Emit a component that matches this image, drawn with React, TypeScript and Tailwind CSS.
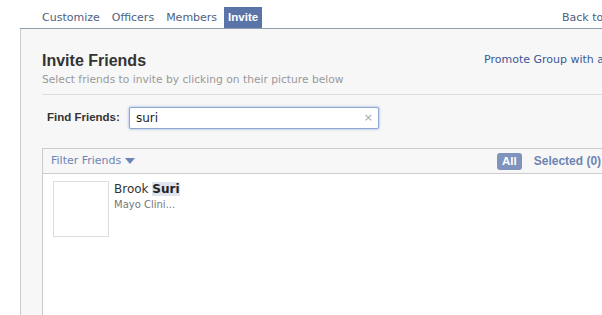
import React from "react";

const tabs = ["Customize", "Officers", "Members"];

export default function App() {
  return (
    <div className="w-[602px] h-[315px] overflow-hidden bg-white text-[11px] text-[#333] font-['DejaVu_Sans',sans-serif]">
      {/* tab bar */}
      <div className="ml-[20px] w-[800px] h-[29px] flex items-end border-b border-[#8e9bb0] pl-[17px]">
        <div className="w-[525px] flex items-end gap-[2px]">
          {tabs.map((t) => (
            <span key={t} className="h-[21px] px-[5px] leading-[21px] text-[#4e5f80]">
              {t}
            </span>
          ))}
          <span className="h-[21px] px-[4px] leading-[21px] bg-[#5b74a8] text-white font-bold text-[11.5px] font-['Liberation_Sans',sans-serif]">
            Invite
          </span>
        </div>
        <span className="h-[21px] leading-[21px] text-[#4e5f80]">Back to Group</span>
      </div>

      {/* panel */}
      <div className="ml-[20px] w-[800px] h-[300px] border-l border-[#cccccc] bg-[#f7f7f7] pl-[21px] pt-[22px]">
        <div className="flex border-b border-[#dddddd] pb-[7px]">
          <div className="w-[442px]">
            <h1 className="text-[16px] leading-[20px] font-bold text-[#333] font-['Liberation_Sans',sans-serif]">
              Invite Friends
            </h1>
            <p className="mt-[2px] text-[10.7px] leading-[14px] text-[#999]">
              Select friends to invite by clicking on their picture below
            </p>
          </div>
          <span className="mt-[2px] leading-[14px] text-[#3b5998]">Promote Group with an Ad</span>
        </div>

        <div className="mt-[12px] flex items-center pl-[5px]">
          <span className="w-[82px] text-[11.5px] font-bold text-[#333] font-['Liberation_Sans',sans-serif]">
            Find Friends:
          </span>
          <div className="w-[250px] h-[22px] flex items-center justify-between border border-[#8fa6cf] rounded-[2px] bg-white pl-[6px] pr-[5px] shadow-[0_0_2px_1px_#c5d3ec]">
            <span className="text-[12px] text-[#222]">suri</span>
            <span className="text-[11px] text-[#aaa]">×</span>
          </div>
        </div>

        <div className="mt-[19px] border border-[#cccccc] bg-white h-[200px]">
          <div className="h-[25px] flex items-center bg-[#f7f7f7] border-b border-[#cccccc] pl-[8px]">
            <div className="w-[446px] flex items-center gap-[4px] text-[#6d84b4]">
              <span>Filter Friends</span>
              <svg width="10" height="6" viewBox="0 0 10 6">
                <path d="M0 0 H10 L5 6 Z" fill="#6d84b4" />
              </svg>
            </div>
            <span className="h-[17px] px-[5px] leading-[17px] rounded-[3px] bg-[#7f93bc] text-white font-bold text-[11.5px] font-['Liberation_Sans',sans-serif]">
              All
            </span>
            <span className="ml-[12px] font-bold text-[12px] text-[#6d84b4] font-['Liberation_Sans',sans-serif]">
              Selected (0)
            </span>
          </div>

          <div className="flex pl-[10px] pt-[7px]">
            <div className="w-[56px] h-[56px] border border-[#dddddd] bg-white" />
            <div className="ml-[5px]">
              <div className="mt-[1px] text-[12px] leading-[15px] text-[#333]">
                Brook <span className="font-bold bg-[#dfe4ee] text-[#222]">Suri</span>
              </div>
              <div className="mt-[1px] text-[10px] leading-[13px] text-[#777]">Mayo Clini...</div>
            </div>
          </div>
        </div>
      </div>
    </div>
  );
}
